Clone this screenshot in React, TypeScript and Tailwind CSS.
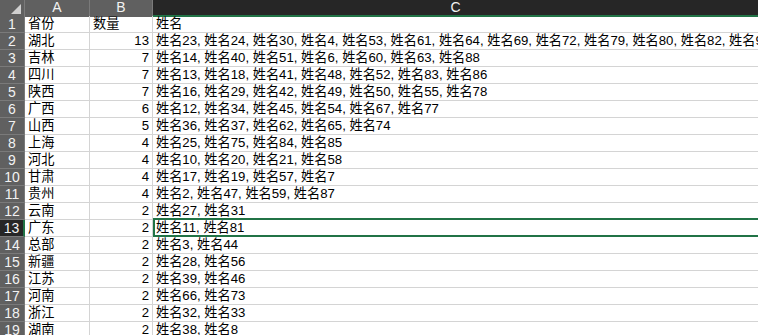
import React from 'react';

const rows: [string, string, string][] = [
  ['省份', '数量', '姓名'],
  ['湖北', '13', '姓名23, 姓名24, 姓名30, 姓名4, 姓名53, 姓名61, 姓名64, 姓名69, 姓名72, 姓名79, 姓名80, 姓名82, 姓名90'],
  ['吉林', '7', '姓名14, 姓名40, 姓名51, 姓名6, 姓名60, 姓名63, 姓名88'],
  ['四川', '7', '姓名13, 姓名18, 姓名41, 姓名48, 姓名52, 姓名83, 姓名86'],
  ['陕西', '7', '姓名16, 姓名29, 姓名42, 姓名49, 姓名50, 姓名55, 姓名78'],
  ['广西', '6', '姓名12, 姓名34, 姓名45, 姓名54, 姓名67, 姓名77'],
  ['山西', '5', '姓名36, 姓名37, 姓名62, 姓名65, 姓名74'],
  ['上海', '4', '姓名25, 姓名75, 姓名84, 姓名85'],
  ['河北', '4', '姓名10, 姓名20, 姓名21, 姓名58'],
  ['甘肃', '4', '姓名17, 姓名19, 姓名57, 姓名7'],
  ['贵州', '4', '姓名2, 姓名47, 姓名59, 姓名87'],
  ['云南', '2', '姓名27, 姓名31'],
  ['广东', '2', '姓名11, 姓名81'],
  ['总部', '2', '姓名3, 姓名44'],
  ['新疆', '2', '姓名28, 姓名56'],
  ['江苏', '2', '姓名39, 姓名46'],
  ['河南', '2', '姓名66, 姓名73'],
  ['浙江', '2', '姓名32, 姓名33'],
  ['湖南', '2', '姓名38, 姓名8'],
];

const SELECTED = 13;

export default function App() {
  return (
    <div
      className="w-[758px] h-[335px] overflow-hidden bg-white text-[13.2px] text-black"
      style={{ fontFamily: '"Liberation Sans", "Noto Sans CJK SC", sans-serif' }}
    >
      {/* column headers */}
      <div className="grid grid-cols-[25px_65px_63px_1fr] h-[16px] text-[14px] leading-[15px]">
        <div className="relative bg-[#606060] border-r border-[#7a7a7a]">
          <span className="absolute right-[3px] bottom-[3px] w-0 h-0 border-l-[10px] border-l-transparent border-b-[10px] border-b-[#d0d0d0]" />
        </div>
        <div className="bg-[#606060] border-r border-[#7a7a7a] text-[#f2f2f2] text-center">A</div>
        <div className="bg-[#606060] border-r border-[#7a7a7a] text-[#f2f2f2] text-center">B</div>
        <div className="bg-[#262626] border-b-2 border-[#217346] text-[#f2f2f2] text-center">C</div>
      </div>

      {rows.map((r, i) => {
        const n = i + 1;
        const sel = n === SELECTED;
        return (
          <div key={n} className="grid grid-cols-[25px_65px_63px_1fr] h-[17px] leading-[16px]">
            <div
              className={`text-center text-[14px] text-[#f2f2f2] border-b border-[#7a7a7a] ${
                sel ? 'bg-[#262626] border-r-2 border-r-[#217346]' : 'bg-[#606060] border-r border-r-[#7a7a7a]'
              }`}
            >
              {n}
            </div>
            <div className="px-[3px] border-r border-b border-[#d4d4d4] whitespace-nowrap overflow-hidden">{r[0]}</div>
            <div className={`px-[3px] border-r border-b border-[#d4d4d4] whitespace-nowrap overflow-hidden ${n === 1 ? 'text-left' : 'text-right'}`}>
              {r[1]}
            </div>
            <div className="relative px-[3px] border-b border-[#d4d4d4] whitespace-nowrap">
              {r[2]}
              {sel && (
                <span className="absolute left-0 right-0 top-[-2px] bottom-[-1px] border-y-2 border-l-2 border-[#217346] pointer-events-none" />
              )}
            </div>
          </div>
        );
      })}
    </div>
  );
}
